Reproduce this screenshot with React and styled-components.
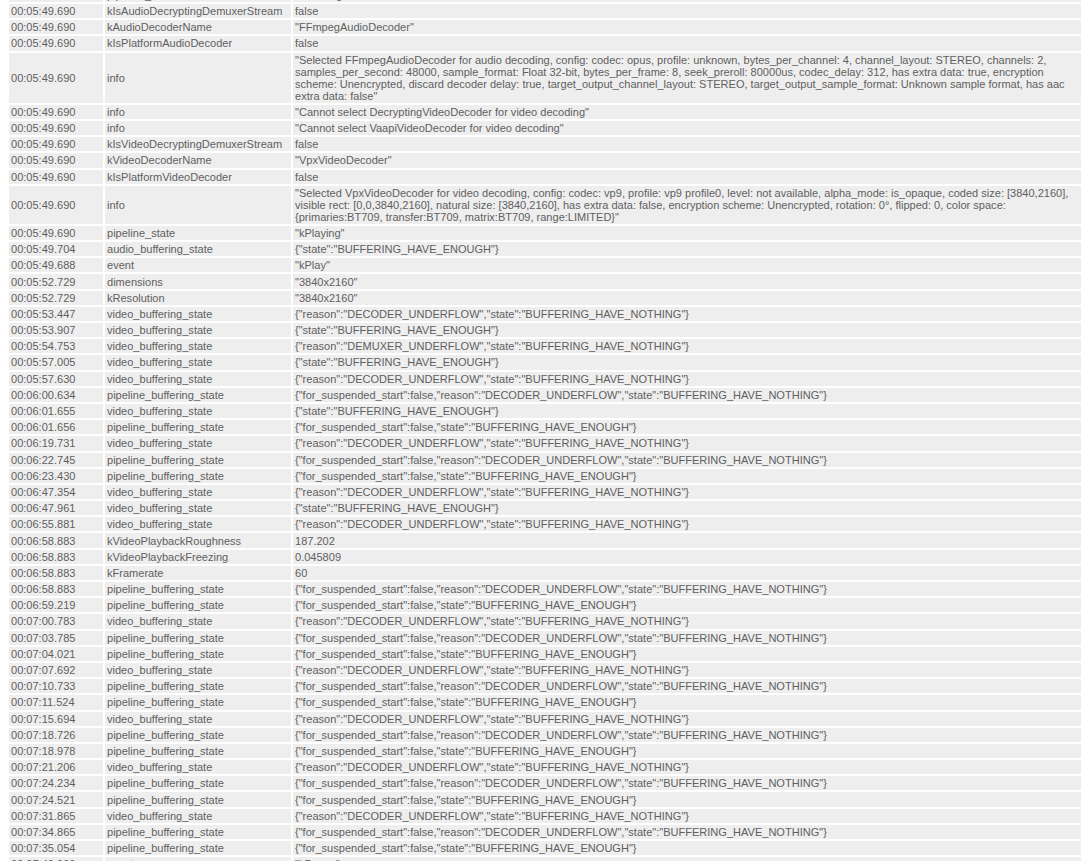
import React from 'react'
import styled, { createGlobalStyle } from 'styled-components'

const GlobalStyle = createGlobalStyle`
  html, body {
    margin: 0;
    height: 100%;
    overflow: hidden;
    background: #fff;
  }
`

const Page = styled.div`
  height: 861px;
  width: 1081px;
  overflow: hidden;
  font-family: "Liberation Sans", Arial, sans-serif;
  font-size: 11.04px;
  color: #5f5f5f;
`

const LogTable = styled.table`
  border-collapse: separate;
  border-spacing: 2px;
  table-layout: fixed;
  width: 1076px;
  margin: -14.2px 0 0 7px;
`

const Cell = styled.td`
  background: #eeeeee;
  padding: 1.1px 2px;
  line-height: 12px;
  vertical-align: middle;
`

const TimeCell = styled(Cell)`
  width: 90px;
`

const PropertyCell = styled(Cell)`
  width: 182px;
`

const bufferingVideo = '{"reason":"DECODER_UNDERFLOW","state":"BUFFERING_HAVE_NOTHING"}'
const demuxerVideo = '{"reason":"DEMUXER_UNDERFLOW","state":"BUFFERING_HAVE_NOTHING"}'
const enough = '{"state":"BUFFERING_HAVE_ENOUGH"}'
const pipeUnder = '{"for_suspended_start":false,"reason":"DECODER_UNDERFLOW","state":"BUFFERING_HAVE_NOTHING"}'
const pipeEnough = '{"for_suspended_start":false,"state":"BUFFERING_HAVE_ENOUGH"}'
const V = 'video_buffering_state'
const P = 'pipeline_buffering_state'

const rows = [
  ['00:05:49.690', 'pipeline_state', '"kStarting"'],
  ['00:05:49.690', 'kIsAudioDecryptingDemuxerStream', 'false'],
  ['00:05:49.690', 'kAudioDecoderName', '"FFmpegAudioDecoder"'],
  ['00:05:49.690', 'kIsPlatformAudioDecoder', 'false'],
  ['00:05:49.690', 'info', '"Selected FFmpegAudioDecoder for audio decoding, config: codec: opus, profile: unknown, bytes_per_channel: 4, channel_layout: STEREO, channels: 2, samples_per_second: 48000, sample_format: Float 32-bit, bytes_per_frame: 8, seek_preroll: 80000us, codec_delay: 312, has extra data: true, encryption scheme: Unencrypted, discard decoder delay: true, target_output_channel_layout: STEREO, target_output_sample_format: Unknown sample format, has aac extra data: false"'],
  ['00:05:49.690', 'info', '"Cannot select DecryptingVideoDecoder for video decoding"'],
  ['00:05:49.690', 'info', '"Cannot select VaapiVideoDecoder for video decoding"'],
  ['00:05:49.690', 'kIsVideoDecryptingDemuxerStream', 'false'],
  ['00:05:49.690', 'kVideoDecoderName', '"VpxVideoDecoder"'],
  ['00:05:49.690', 'kIsPlatformVideoDecoder', 'false'],
  ['00:05:49.690', 'info', '"Selected VpxVideoDecoder for video decoding, config: codec: vp9, profile: vp9 profile0, level: not available, alpha_mode: is_opaque, coded size: [3840,2160], visible rect: [0,0,3840,2160], natural size: [3840,2160], has extra data: false, encryption scheme: Unencrypted, rotation: 0°, flipped: 0, color space: {primaries:BT709, transfer:BT709, matrix:BT709, range:LIMITED}"'],
  ['00:05:49.690', 'pipeline_state', '"kPlaying"'],
  ['00:05:49.704', 'audio_buffering_state', enough],
  ['00:05:49.688', 'event', '"kPlay"'],
  ['00:05:52.729', 'dimensions', '"3840x2160"'],
  ['00:05:52.729', 'kResolution', '"3840x2160"'],
  ['00:05:53.447', V, bufferingVideo],
  ['00:05:53.907', V, enough],
  ['00:05:54.753', V, demuxerVideo],
  ['00:05:57.005', V, enough],
  ['00:05:57.630', V, bufferingVideo],
  ['00:06:00.634', P, pipeUnder],
  ['00:06:01.655', V, enough],
  ['00:06:01.656', P, pipeEnough],
  ['00:06:19.731', V, bufferingVideo],
  ['00:06:22.745', P, pipeUnder],
  ['00:06:23.430', P, pipeEnough],
  ['00:06:47.354', V, bufferingVideo],
  ['00:06:47.961', V, enough],
  ['00:06:55.881', V, bufferingVideo],
  ['00:06:58.883', 'kVideoPlaybackRoughness', '187.202'],
  ['00:06:58.883', 'kVideoPlaybackFreezing', '0.045809'],
  ['00:06:58.883', 'kFramerate', '60'],
  ['00:06:58.883', P, pipeUnder],
  ['00:06:59.219', P, pipeEnough],
  ['00:07:00.783', V, bufferingVideo],
  ['00:07:03.785', P, pipeUnder],
  ['00:07:04.021', P, pipeEnough],
  ['00:07:07.692', V, bufferingVideo],
  ['00:07:10.733', P, pipeUnder],
  ['00:07:11.524', P, pipeEnough],
  ['00:07:15.694', V, bufferingVideo],
  ['00:07:18.726', P, pipeUnder],
  ['00:07:18.978', P, pipeEnough],
  ['00:07:21.206', V, bufferingVideo],
  ['00:07:24.234', P, pipeUnder],
  ['00:07:24.521', P, pipeEnough],
  ['00:07:31.865', V, bufferingVideo],
  ['00:07:34.865', P, pipeUnder],
  ['00:07:35.054', P, pipeEnough],
  ['00:07:40.000', 'event', '"kPause"'],
]

export default function App() {
  return (
    <Page>
      <GlobalStyle />
      <LogTable>
        <tbody>
          {rows.map((row, i) => (
            <tr key={i}>
              <TimeCell>{row[0]}</TimeCell>
              <PropertyCell>{row[1]}</PropertyCell>
              <Cell>{row[2]}</Cell>
            </tr>
          ))}
        </tbody>
      </LogTable>
    </Page>
  )
}
